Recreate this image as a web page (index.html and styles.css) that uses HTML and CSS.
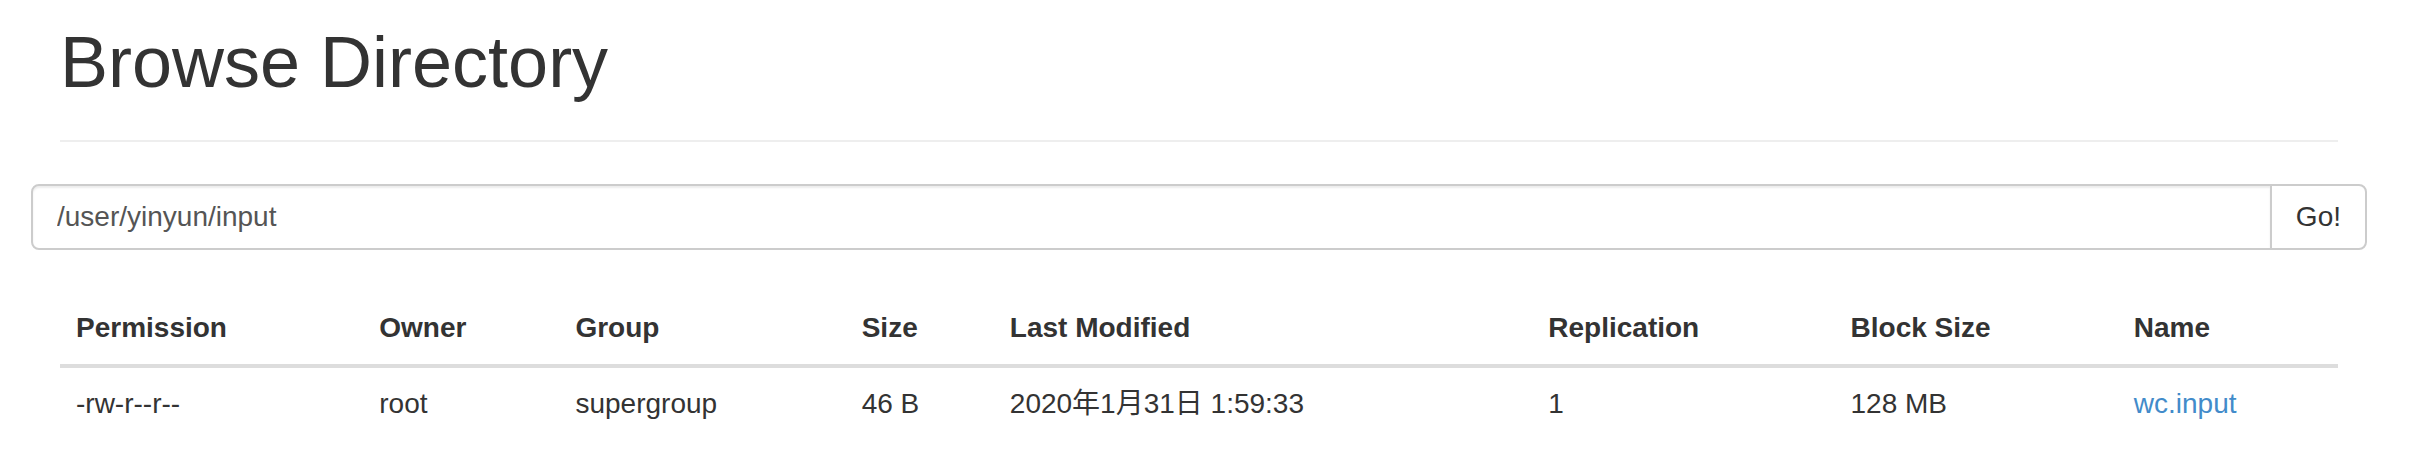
FILE: index.html
```html
<!DOCTYPE html>
<html>
<head>
<meta charset="utf-8">
<title>Browsing HDFS</title>
<link rel="stylesheet" href="styles.css">
</head>
<body>
<div class="container">
  <div class="page-header">
    <h1>Browse Directory</h1>
  </div>
  <div class="row">
    <form class="nav-form" onsubmit="return false;">
      <div class="input-group">
        <input type="text" class="form-control" value="/user/yinyun/input">
        <span class="input-group-btn"><button class="btn" type="submit">Go!</button></span>
      </div>
    </form>
  </div>
  <br>
  <table class="table">
    <colgroup>
      <col class="c-perm"><col class="c-owner"><col class="c-group"><col class="c-size"><col class="c-mod"><col class="c-rep"><col class="c-block"><col class="c-name">
    </colgroup>
    <thead>
      <tr>
        <th>Permission</th><th>Owner</th><th>Group</th><th>Size</th><th>Last Modified</th><th>Replication</th><th>Block Size</th><th>Name</th>
      </tr>
    </thead>
    <tbody>
      <tr>
        <td>-rw-r--r--</td><td>root</td><td>supergroup</td><td>46 B</td><td>2020年1月31日 1:59:33</td><td>1</td><td>128 MB</td><td><a href="#" class="file-link">wc.input</a></td>
      </tr>
    </tbody>
  </table>
</div>
</body>
</html>
```
FILE: styles.css
```css
* { box-sizing: border-box; }
html, body { margin: 0; padding: 0; background: #fff; }
body {
  font-family: "Liberation Sans", Arial, "Noto Sans CJK SC", sans-serif;
  font-size: 28px;
  line-height: 40px;
  color: #333;
}
.container {
  margin-left: 30px;
  width: 2338px;
  padding: 0 30px;
}
.page-header {
  padding-bottom: 18px;
  border-bottom: 2px solid #eee;
  margin-bottom: 42px;
}
.page-header h1 {
  margin: 23px 0 20px 0;
  font-size: 72px;
  line-height: 1.1;
  font-weight: 500;
  color: #333;
}
.row { margin: 0 -29px; }
.nav-form { margin: 0; }
.input-group { display: flex; height: 66px; }
.form-control {
  flex: 1;
  min-width: 0;
  height: 66px;
  padding: 0 24px;
  font-family: inherit;
  font-size: 28px;
  color: #555;
  background: #fff;
  border: 2px solid #ccc;
  border-radius: 8px 0 0 8px;
  box-shadow: inset 0 2px 2px rgba(0,0,0,.075);
  outline: none;
}
.input-group-btn { display: flex; }
.btn {
  height: 66px;
  padding: 0 24px;
  margin-left: -2px;
  font-family: inherit;
  font-size: 28px;
  color: #333;
  background: #fff;
  border: 2px solid #ccc;
  border-radius: 0 8px 8px 0;
}
.table {
  width: 100%;
  margin-top: 2px;
  border-collapse: collapse;
  table-layout: fixed;
}
.table th, .table td {
  padding: 16px;
  line-height: 40px;
  text-align: left;
  white-space: nowrap;
}
.table th { font-weight: bold; vertical-align: bottom; border-bottom: 4px solid #ddd; }
.table td { vertical-align: top; border-top: 2px solid #ddd; }
.c-perm { width: 303px; }
.c-owner { width: 196px; }
.c-group { width: 286px; }
.c-size { width: 148px; }
.c-mod { width: 538px; }
.c-rep { width: 302px; }
.c-block { width: 283px; }
.c-name { width: 220px; }
.file-link { color: #428bca; text-decoration: none; }
```
